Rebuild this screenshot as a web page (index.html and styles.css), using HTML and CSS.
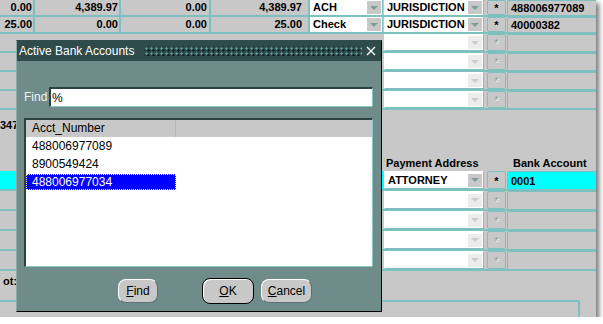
FILE: index.html
```html
<!DOCTYPE html>
<html lang="en">
 <head>
    <meta charset="utf-8">
    <title>Active Bank Accounts</title>
    <link rel="stylesheet" href="styles.css">
 </head>

 <body>
  <div class="screen">

    <!-- rows of the form behind the dialog -->
    <div class="row">
        <div class="cell c1">0.00</div>
        <div class="cell c2">4,389.97</div>
        <div class="cell c3">0.00</div>
        <div class="cell c4">4,389.97</div>
        <div class="pick p1"><span>ACH</span><i class="arrow"></i></div>
        <div class="pick p2"><span>JURISDICTION</span><i class="arrow"></i></div>
        <div class="star">*</div>
        <div class="acct">488006977089</div>
    </div>
    <div class="row">
        <div class="cell c1">25.00</div>
        <div class="cell c2">0.00</div>
        <div class="cell c3">0.00</div>
        <div class="cell c4">25.00</div>
        <div class="pick p1"><span>Check</span><i class="arrow"></i></div>
        <div class="pick p2"><span>JURISDICTION</span><i class="arrow"></i></div>
        <div class="star">*</div>
        <div class="acct">40000382</div>
    </div>
    <div class="row tall">
        <div class="blank"></div>
        <div class="pick p2 empty"><span></span><i class="arrow"></i></div>
        <div class="star off">*</div>
        <div class="acct"></div>
    </div>
    <div class="row tall">
        <div class="blank"></div>
        <div class="pick p2 empty"><span></span><i class="arrow"></i></div>
        <div class="star off">*</div>
        <div class="acct"></div>
    </div>
    <div class="row tall">
        <div class="blank"></div>
        <div class="pick p2 empty"><span></span><i class="arrow"></i></div>
        <div class="star off">*</div>
        <div class="acct"></div>
    </div>
    <div class="row tall">
        <div class="blank"></div>
        <div class="pick p2 empty"><span></span><i class="arrow"></i></div>
        <div class="star off">*</div>
        <div class="acct"></div>
    </div>

    <div class="mid">
        <div class="lot">347</div>
        <div class="lbl pay">Payment Address</div>
        <div class="lbl bank">Bank Account</div>
    </div>

    <div class="row wide">
        <div class="blank cur"></div>
        <div class="pick p2"><span>ATTORNEY</span><i class="arrow"></i></div>
        <div class="star">*</div>
        <div class="acct cur">0001</div>
    </div>
    <div class="row wide">
        <div class="blank"></div>
        <div class="pick p2 empty"><span></span><i class="arrow"></i></div>
        <div class="star off">*</div>
        <div class="acct"></div>
    </div>
    <div class="row wide">
        <div class="blank"></div>
        <div class="pick p2 empty"><span></span><i class="arrow"></i></div>
        <div class="star off">*</div>
        <div class="acct"></div>
    </div>
    <div class="row wide">
        <div class="blank"></div>
        <div class="pick p2 empty"><span></span><i class="arrow"></i></div>
        <div class="star off">*</div>
        <div class="acct"></div>
    </div>
    <div class="row wide">
        <div class="blank"></div>
        <div class="pick p2 empty"><span></span><i class="arrow"></i></div>
        <div class="star off">*</div>
        <div class="acct"></div>
    </div>

    <div class="foot">ot:</div>
    <div class="panel"></div>

    <!-- LOV dialog -->
    <div class="dlg">
        <div class="title">
            <span class="caption">Active Bank Accounts</span>
            <span class="dots"></span>
            <svg class="close" width="10" height="10" viewBox="0 0 10 10">
                <path d="M1 1 L9 9 M9 1 L1 9" stroke="#fff" stroke-width="1.4" fill="none"/>
            </svg>
        </div>

        <div class="find">
            <label>Find</label>
            <div class="input">%</div>
        </div>

        <div class="list">
            <div class="head">
                <div class="hcell">Acct_Number</div>
                <div class="hcell rest"></div>
            </div>
            <div class="item">488006977089</div>
            <div class="item">8900549424</div>
            <div class="item sel">488006977034</div>
        </div>

        <div class="buttons">
            <div class="btn b-find"><u>F</u>ind</div>
            <div class="btn b-ok"><u>O</u>K</div>
            <div class="btn b-cancel"><u>C</u>ancel</div>
        </div>
    </div>

  </div>
 </body>
</html>
```

FILE: styles.css
```css
html, body {
    margin: 0;
    padding: 0;
    background: #fff;
}

.screen {
    position: relative;
    width: 596px;
    height: 317px;
    overflow: hidden;
    background: #c8c8c8;
    box-shadow: 3px 3px 5px rgba(0, 0, 0, 0.55);
    font-family: "Liberation Sans", Arial, sans-serif;
    font-size: 11px;
    font-weight: bold;
    color: #000;
}

/* form rows */

.row {
    display: flex;
    height: 15px;
    line-height: 15px;
    border-bottom: 2px solid #7cc0c0;
}

.row.tall {
    height: 17px;
    line-height: 17px;
}

.row.wide {
    height: 18px;
    line-height: 18px;
}

.cell {
    box-sizing: border-box;
    border-right: 2px solid #7cc0c0;
    text-align: right;
    padding-right: 1px;
}

.c1 { width: 35px; }
.c2 { width: 86px; }
.c3 { width: 90px; padding-right: 2px; }
.c4 { width: 99px; padding-right: 6px; }

.blank {
    width: 384px;
}

.blank.cur {
    background: #00ffff;
}

.pick {
    box-sizing: border-box;
    display: flex;
    align-items: center;
    background: #fff;
    border-right: 1px solid #7cc0c0;
    margin-right: 1px;
}

.pick span {
    flex: 1;
    padding-left: 3px;
    overflow: hidden;
    white-space: nowrap;
}

.p1 { width: 73px; }
.p2 { width: 100px; margin-right: 3px; }

.row.tall .pick, .row.wide .pick {
    border: 1px solid #7cc0c0;
    border-top-color: #fff;
    border-left-color: #fff;
}

.arrow {
    display: flex;
    align-items: center;
    justify-content: center;
    width: 14px;
    height: 13px;
    margin-right: 1px;
    background: #c8c8c8;
}

.arrow::after {
    content: "";
    border-left: 4px solid transparent;
    border-right: 4px solid transparent;
    border-top: 4px solid #7f9c9c;
}

.pick.empty .arrow {
    background: #ececec;
}

.pick.empty .arrow::after {
    border-top-color: #c6cece;
}

.star {
    box-sizing: border-box;
    width: 19px;
    margin-right: 1px;
    text-align: center;
    border: 1px solid #7cc0c0;
    border-radius: 2px;
    font-size: 11px;
}

.star.off {
    color: #8aa0a0;
    text-shadow: 1px 1px 0 #fff;
    font-weight: normal;
}

.acct {
    box-sizing: border-box;
    flex: 1;
    padding-left: 3px;
    border-left: 1px solid #7cc0c0;
    border-top: 1px solid #7cc0c0;
    border-top-left-radius: 2px;
}

.acct.cur {
    background: #00ffff;
}

/* labels area */

.mid {
    display: flex;
    height: 61px;
    line-height: 13px;
}

.lot {
    width: 384px;
    padding-top: 9px;
}

.lbl {
    align-self: flex-end;
    margin-bottom: 1px;
}

.pay {
    width: 121px;
    padding-left: 2px;
}

.bank {
    padding-left: 6px;
}

.foot {
    height: 25px;
    padding-top: 4px;
    padding-left: 3px;
    line-height: 13px;
}

.panel {
    width: 578px;
    height: 20px;
    border-top: 2px solid #7cc0c0;
    border-right: 2px solid #7cc0c0;
    border-top-right-radius: 2px;
}

/* dialog */

.dlg {
    position: absolute;
    left: 16px;
    top: 40px;
    width: 366px;
    height: 272px;
    box-sizing: border-box;
    background: #6f8b8a;
    border: 1px solid #000;
    border-top-color: #2f4b4b;
    border-left-color: #8fa9a9;
    font-size: 12px;
    font-weight: normal;
}

.title {
    display: flex;
    align-items: center;
    height: 20px;
    background: #2f4b4b;
    color: #fff;
    padding: 0 5px 0 2px;
}

.caption {
    white-space: nowrap;
}

.dots {
    flex: 1;
    height: 10px;
    margin: 0 4px 0 10px;
    background-image:
        radial-gradient(circle, #63a6a6 0.9px, transparent 1.2px),
        radial-gradient(circle, #0d1a1a 0.9px, transparent 1.2px);
    background-size: 5px 5px, 5px 5px;
    background-position: 0 0, 2px 2px;
}

.close {
    display: block;
}

.find {
    display: flex;
    align-items: center;
    margin-top: 26px;
}

.find label {
    box-sizing: border-box;
    width: 32px;
    padding-left: 7px;
    color: #eef4f4;
}

.input {
    box-sizing: border-box;
    width: 324px;
    height: 20px;
    line-height: 18px;
    padding-left: 1px;
    background: #fff;
    border-top: 2px solid #2c4242;
    border-left: 2px solid #2c4242;
    border-right: 1px solid #8cc8c8;
    border-bottom: 1px solid #8cc8c8;
    border-bottom-right-radius: 2px;
}

.list {
    box-sizing: border-box;
    width: 349px;
    height: 149px;
    margin: 11px 0 0 7px;
    background: #fff;
    border-top: 2px solid #2c4242;
    border-left: 2px solid #2c4242;
    border-right: 1px solid #8cc8c8;
    border-bottom: 1px solid #8cc8c8;
    border-bottom-right-radius: 2px;
}

.head {
    display: flex;
    height: 17px;
    line-height: 17px;
    background: #c8c8c8;
}

.hcell {
    box-sizing: border-box;
    width: 150px;
    padding-left: 6px;
    border-right: 1px solid #8cc8c8;
}

.hcell.rest {
    flex: 1;
    border-right: 0;
}

.item {
    box-sizing: border-box;
    width: 150px;
    height: 18px;
    line-height: 18px;
    padding-left: 6px;
}

.item.sel {
    margin-top: 1px;
    height: 16px;
    line-height: 16px;
    background: #0000ff;
    color: #fff;
    outline: 1px dotted #ffffa0;
    outline-offset: -1px;
}

.buttons {
    display: flex;
    align-items: center;
    height: 26px;
    margin-top: 11px;
    padding-left: 101px;
}

.btn {
    box-sizing: border-box;
    height: 24px;
    line-height: 22px;
    text-align: center;
    background: #c8c8c8;
    border: 1px solid #5b7070;
    border-top-color: #fff;
    border-left-color: #fff;
    border-radius: 8px;
}

.b-find {
    width: 40px;
}

.b-ok {
    width: 52px;
    height: 26px;
    line-height: 24px;
    margin-left: 44px;
    border: 1px solid #000;
    box-shadow: inset 1px 1px 0 #fff;
}

.b-cancel {
    width: 51px;
    margin-left: 7px;
}
```
